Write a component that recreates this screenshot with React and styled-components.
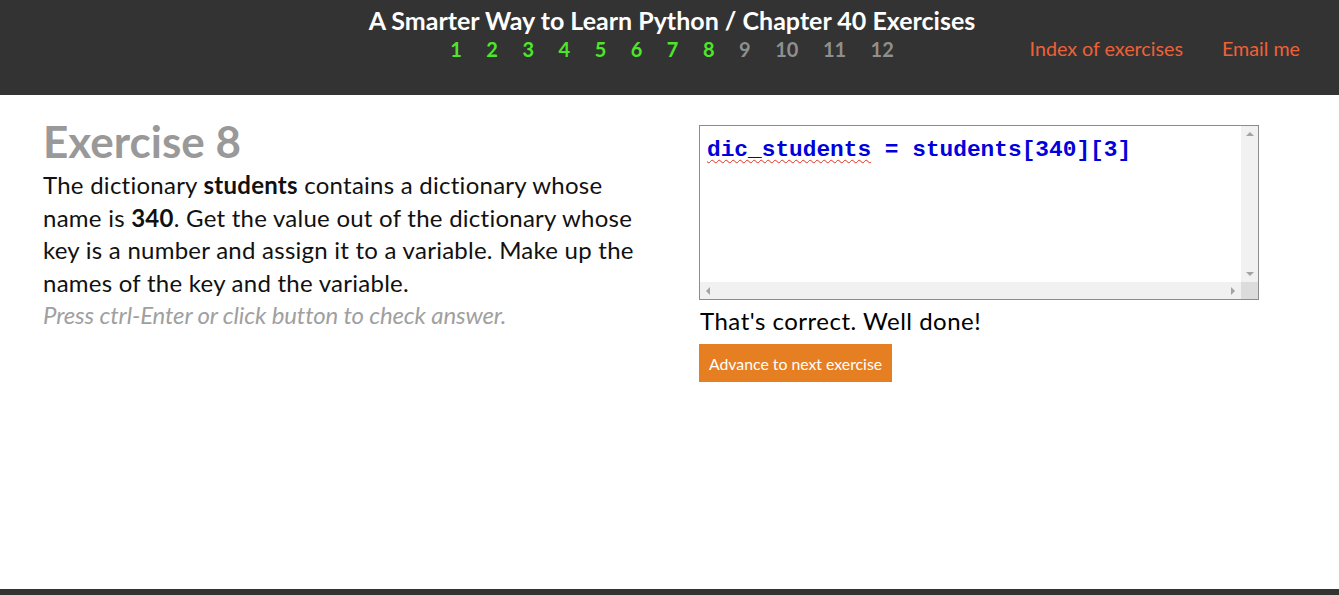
import styled, { createGlobalStyle } from "styled-components";

const GlobalStyle = createGlobalStyle`
  html, body {
    margin: 0;
    padding: 0;
    background: #fff;
  }
  body {
    font-family: Lato, "Open Sans", sans-serif;
  }
  * { box-sizing: border-box; }
`

const Page = styled.div`
  display: flex;
  flex-direction: column;
  height: 595px;
  overflow: hidden;
`

const Header = styled.header`
  background: #333333;
  height: 95px;
  padding-top: 5px;
  display: flex;
  flex-direction: column;
  align-items: stretch;
`

const Title = styled.h1`
  margin: 0;
  text-align: center;
  color: #ffffff;
  font-size: 25px;
  font-weight: 700;
  line-height: 30px;
  padding-left: 5px;
`

const NavRow = styled.div`
  display: grid;
  grid-template-columns: 1fr auto 1fr;
  align-items: center;
  margin-top: 2px;
`

const Numbers = styled.div`
  display: flex;
  gap: 24.5px;
  padding-left: 5px;
`

const Num = styled.a`
  color: ${p => (p.$done ? "#4ee62a" : "#8f8f8f")};
  font-size: 20px;
  font-weight: 700;
  line-height: 24px;
  text-decoration: none;
`

const Links = styled.div`
  display: flex;
  justify-content: flex-end;
  gap: 39px;
  padding-right: 39px;
`

const HeadLink = styled.a`
  color: #ee6137;
  font-size: 19.7px;
  line-height: 24px;
  text-decoration: none;
`

const Main = styled.main`
  flex: 1;
  display: flex;
  padding: 19px 0 0 43px;
`

const LeftCol = styled.section`
  width: 600px;
`

const Heading = styled.h2`
  margin: 0;
  color: #999999;
  font-size: 44px;
  font-weight: 700;
  line-height: 55px;
`

const Text = styled.p`
  margin: 0;
  color: #111;
  font-size: 24px;
  line-height: 32.5px;
  letter-spacing: 0.25px;
  b { font-weight: 700; }
`

const Hint = styled.p`
  margin: 0;
  color: #a0a0a0;
  font-size: 24px;
  font-style: italic;
  line-height: 32px;
  letter-spacing: -0.15px;
`

const RightCol = styled.section`
  margin-left: 56px;
  padding-top: 11px;
  display: flex;
  flex-direction: column;
  align-items: flex-start;
`

const Editor = styled.div`
  width: 560px;
  height: 175px;
  border: 1px solid #8c8c8c;
  display: grid;
  grid-template-columns: 1fr 17px;
  grid-template-rows: 1fr 17px;
  background: #fff;
`

const Code = styled.div`
  padding: 10px 0 0 7px;
  font-family: "Liberation Mono", "Courier New", monospace;
  font-size: 22.8px;
  font-weight: 700;
  color: #0000dd;
  line-height: 28px;
  white-space: pre;
`

const Misspelled = styled.span`
  text-decoration: underline wavy #e0301e;
  text-decoration-thickness: 1px;
  text-underline-offset: 3px;
`

const VBar = styled.div`
  background: #f1f1f1;
  display: flex;
  flex-direction: column;
  justify-content: space-between;
  align-items: center;
  padding: 6px 0;
`

const HBar = styled.div`
  background: #f1f1f1;
  display: flex;
  justify-content: space-between;
  align-items: center;
  padding: 0 6px;
`

const Corner = styled.div`
  background: #dcdcdc;
`

const Arrow = styled.span`
  width: 0;
  height: 0;
  border: 4px solid transparent;
  ${p => p.$dir === "up" && "border-bottom-color: #a3a3a3; border-top-width: 0;"}
  ${p => p.$dir === "down" && "border-top-color: #a3a3a3; border-bottom-width: 0;"}
  ${p => p.$dir === "left" && "border-right-color: #a3a3a3; border-left-width: 0;"}
  ${p => p.$dir === "right" && "border-left-color: #a3a3a3; border-right-width: 0;"}
`

const Result = styled.p`
  margin: 5px 0 0 1px;
  color: #000;
  font-size: 24px;
  line-height: 32px;
  letter-spacing: 0.5px;
`

const Button = styled.button`
  margin-top: 7px;
  background: #e67e22;
  color: #fff;
  border: none;
  height: 38px;
  padding: 0 10px;
  font-family: Lato, sans-serif;
  font-size: 15.8px;
  cursor: pointer;
`

const Footer = styled.footer`
  height: 6px;
  background: #333333;
`

const exercises = [1, 2, 3, 4, 5, 6, 7, 8, 9, 10, 11, 12]

export default function App() {
  return (
    <Page>
      <GlobalStyle />
      <Header>
        <Title>A Smarter Way to Learn Python / Chapter 40 Exercises</Title>
        <NavRow>
          <div />
          <Numbers>
            {exercises.map(n => (
              <Num key={n} href="#" $done={n <= 8}>{n}</Num>
            ))}
          </Numbers>
          <Links>
            <HeadLink href="#">Index of exercises</HeadLink>
            <HeadLink href="#">Email me</HeadLink>
          </Links>
        </NavRow>
      </Header>
      <Main>
        <LeftCol>
          <Heading>Exercise 8</Heading>
          <Text>
            The dictionary <b>students</b> contains a dictionary whose name is <b>340</b>. Get the value out of the dictionary whose key is a number and assign it to a variable. Make up the names of the key and the variable.
          </Text>
          <Hint>Press ctrl-Enter or click button to check answer.</Hint>
        </LeftCol>
        <RightCol>
          <Editor>
            <Code><Misspelled>dic_students</Misspelled> = students[340][3]</Code>
            <VBar>
              <Arrow $dir="up" />
              <Arrow $dir="down" />
            </VBar>
            <HBar>
              <Arrow $dir="left" />
              <Arrow $dir="right" />
            </HBar>
            <Corner />
          </Editor>
          <Result>That's correct. Well done!</Result>
          <Button>Advance to next exercise</Button>
        </RightCol>
      </Main>
      <Footer />
    </Page>
  )
}
